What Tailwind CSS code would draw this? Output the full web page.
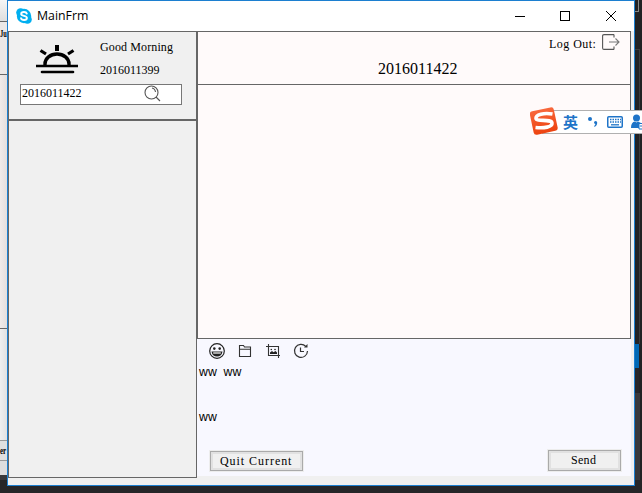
<!DOCTYPE html>
<html lang="en">
<head>
<meta charset="utf-8">
<title>MainFrm</title>
<script src="https://cdn.jsdelivr.net/npm/@tailwindcss/browser@4"></script>
</head>
<body class="w-[642px] h-[493px] overflow-hidden relative bg-[#262628] font-['Liberation_Serif',serif] text-black">
<div class="flex h-[493px]">
  <!-- window behind, left edge -->
  <div class="w-[7px] shrink-0 overflow-hidden flex flex-col text-[10px] leading-none">
    <div class="h-[22px] shrink-0 bg-linear-to-b from-[#f6f6f6] to-[#dedede] border-b border-[#666]"></div>
    <div class="h-[53px] shrink-0 bg-[#ece8e7] border-b border-[#666] pt-[7px]"><span class="block w-[11px] whitespace-nowrap origin-left scale-x-[.64] font-['Liberation_Serif',serif] font-bold">Ju</span></div>
    <div class="h-[254px] shrink-0 bg-linear-to-r from-[#f0ebea] to-[#e4dfde] border-b border-[#666]"></div>
    <div class="h-[111px] shrink-0 bg-linear-to-r from-[#f0f0f0] to-[#e2e2e2]"></div>
    <div class="h-[21px] shrink-0 bg-[#e0e0e0] border-y border-[#999] pt-[5px]"><span class="block w-[9px] whitespace-nowrap origin-left scale-x-[.7] font-['Liberation_Serif',serif] font-bold">er</span></div>
    <div class="h-[14px] shrink-0 bg-[#dedede]"></div>
    <div class="h-[5px] shrink-0 bg-[#39393b]"></div>
  </div>
  <!-- main window -->
  <div class="w-[628px] h-[486px] shrink-0 border border-[#1c7fd0] bg-[#f0f0f0]">
    <div class="h-[30px] bg-white flex items-center pl-[8px]">
      <svg class="w-4 h-4" viewBox="0 0 16 16"><g fill="#00aff0"><circle cx="8" cy="8" r="7.2"/><circle cx="4.6" cy="4.6" r="4.4"/><circle cx="11.4" cy="11.4" r="4.4"/></g><path d="M10.8 5.6C10.4 4.4 9.4 4 8 4 6.3 4 5.2 4.700 5.200 5.900 5.200 8.400 10.900 7.300 10.900 10 10.900 11.300 9.700 12 8.100 12 6.400 12 5.300 11.400 5 10.100" fill="none" stroke="#fff" stroke-width="1.9" stroke-linecap="round"/></svg>
      <span class="ml-[5px] w-[52px] text-[12.300px] font-['Open_Sans',sans-serif] whitespace-nowrap">MainFrm</span>
      <svg class="ml-auto w-[104px] h-[12px] mr-[17px] shrink-0" viewBox="0 0 104 12" fill="none" stroke="#000" shape-rendering="crispEdges"><path d="M2 6.500h10"/><rect x="47.500" y="1.500" width="9" height="9"/><path d="M93 1l10 10M103 1L93 11" shape-rendering="auto"/></svg>
    </div>
    <div class="flex">
      <div class="w-[189px] shrink-0">
        <div class="h-[89px] border border-[#666] flex flex-col">
          <div class="flex h-[52px]">
            <svg class="w-[42px] h-[30px] ml-[27px] mt-[13px]" viewBox="0 0 42 30" fill="none" stroke="#000"><path d="M0 21h42" stroke-width="2.600"/><path d="M6 27h31" stroke-width="2.600" stroke-linecap="round"/><path d="M9 20.500v-1.500a12 10 0 0 1 24 0v1.500" stroke-width="3.400"/><path d="M21 0v6" stroke-width="4"/><path d="M4.500 5.500l5.500 3.500M37.500 5.500L32 9" stroke-width="3.200"/></svg>
            <div class="ml-[22px] pt-[8px] text-[12px] leading-[14px]">
              <span class="block w-[76px] whitespace-nowrap tracking-[.12px]">Good Morning</span>
              <span class="block mt-[9px]">2016011399</span>
            </div>
          </div>
          <div class="ml-[11px] w-[162px] h-[21px] bg-white border border-[#777] flex items-start pl-px text-[12px] leading-[17px]">
            <span>2016011422</span>
            <svg class="ml-[62px] w-[17px] h-[17px]" viewBox="0 0 17 17" fill="none" stroke="#555" stroke-width="1.100"><circle cx="7.500" cy="7.500" r="6.500"/><path d="M12 12l4 4M8 3q3 .5 3.500 4"/></svg>
          </div>
        </div>
        <div class="h-[358px] border border-[#666]"></div>
      </div>
      <div class="w-[434px] shrink-0">
        <div class="h-[54px] border border-[#666] bg-[#fffafa]">
          <div class="flex justify-end h-[24px] text-[12px] leading-[14px] pt-[5px]">
            <span class="block w-[53px] whitespace-nowrap tracking-[.45px]">Log Out:</span>
            <svg class="w-[18px] h-[16px] -mt-[3px] mr-[10px]" viewBox="0 0 18 16" fill="none" stroke="#555" stroke-width="1.100"><path d="M12 .6H2Q.6.600.6 2v12q0 1.400 1.400 1.400h10M12 .6v3M12 12.500v3"/><path d="M7 8h10M13.500 4.500L17 8l-3.500 3.500" stroke="#777"/></svg>
          </div>
          <div class="text-[16px] leading-[18px] pl-[180px] pt-[4px]">2016011422</div>
        </div>
        <div class="h-[254px] border border-t-0 border-[#666] bg-[#fffafa]"></div>
        <div class="h-[137px] w-[434px] bg-[#f8f8ff] flex flex-col">
          <div class="flex pl-[12px] pt-[4px] gap-[12px] h-[24px]">
            <svg class="w-4 h-4" viewBox="0 0 16 16"><circle cx="8" cy="8" r="7.300" fill="none" stroke="#222" stroke-width="1.200"/><circle cx="5.300" cy="5.600" r="1.300" fill="#222"/><circle cx="10.700" cy="5.600" r="1.300" fill="#222"/><path d="M2.500 8.500h11q-.8 5-5.500 5T2.500 8.500z" fill="#222"/><path d="M4.200 10h7.600" stroke="#fff" stroke-width="1.200"/></svg>
            <svg class="w-4 h-4" viewBox="0 0 16 16" fill="none" stroke="#333" stroke-width="1.100"><path d="M2.500 13.500v-11h4l1 1.500h6v9.500zM2.500 6.200h11"/></svg>
            <svg class="w-4 h-4" viewBox="0 0 16 16" fill="none" stroke="#333" stroke-width="1.100"><path d="M3.500 1v11.500H15M1 3.500h12.500V15"/><path d="M5 11V9.500l2-1.500 1.500 1.200L10.500 8 12 9.500V11z" fill="#222" stroke="none"/><circle cx="6.300" cy="6.500" r=".8" fill="#222" stroke="none"/><circle cx="10" cy="6.500" r=".8" fill="#222" stroke="none"/></svg>
            <svg class="w-4 h-4" viewBox="0 0 16 16" fill="none" stroke="#333" stroke-width="1.200"><path d="M12.800 3.500A6.500 6.500 0 1 0 14.500 8M7.500 4.500v4H11"/><path d="M11 4.500h3.500V1z" fill="#333" stroke="none"/></svg>
          </div>
          <div class="pl-[2px] text-[12.300px] leading-[15px] h-[84px] pt-[2px] font-['Liberation_Sans',sans-serif] whitespace-pre">ww  ww


ww</div>
          <div class="flex justify-between pl-[13px] pr-[10px] pt-px text-[12px]">
            <div class="mt-[3px] w-[93px] h-[20px] border border-[#aaa] bg-[#f0f0f0] shadow-[inset_0_0_0_2px_#e1e1e1,0_0_0_1px_#ededed] pl-[9px] leading-[19px]"><span class="block whitespace-nowrap tracking-[.95px]">Quit Current</span></div>
            <div class="mt-[2px] w-[73px] h-[21px] border border-[#aaa] bg-[#f0f0f0] shadow-[inset_0_0_0_2px_#e1e1e1,0_0_0_1px_#ededed] pl-[22px] leading-[19px]"><span class="block whitespace-nowrap tracking-[.3px]">Send</span></div>
          </div>
        </div>
      </div>
    </div>
  </div>
  <!-- dark window behind, right edge -->
  <div class="w-[7px] shrink-0 flex flex-col bg-[#222224]">
    <div class="h-[12px] mr-[3px] border-r border-b border-[#888]"></div>
    <div class="h-[37px]"></div>
    <div class="h-[24px] mr-[2px] border-t border-r border-[#3c3c3e]"></div>
    <div class="h-[271px] mr-[2px] border-r border-[#3c3c3e]"></div>
    <div class="h-[24px] mr-[3px] bg-[#0068b4]"></div>
    <div class="h-[25px] mr-[3px] bg-[#262628]"></div>
    <div class="h-[87px] mr-[2px] bg-[#38383a]"></div>
    <div class="grow bg-[#262628]"></div>
  </div>
</div>
<!-- floating input method bar -->
<div class="absolute left-[530px] top-[107px] w-[112px] h-[29px]">
  <div class="absolute left-[12px] top-[3px] right-0 h-[24px] bg-white border-y border-[#b0b0b0] flex items-center pl-[21px] text-[#1e74c8]">
    <span class="w-[16px] -mt-[2px] text-[15px] leading-none font-bold font-['Noto_Sans_CJK_SC',sans-serif]">英</span>
    <svg class="ml-[8px] w-[12px] h-[12px]" viewBox="0 0 12 12" fill="#1e74c8"><circle cx="3" cy="3" r="2"/><path d="M7 6.500a1.600 1.600 0 1 1 3.200 0Q10.300 9.500 7.300 11V9.800Q8.500 9 8.300 8 7.100 7.800 7 6.500z"/></svg>
    <svg class="ml-[8px] w-[16px] h-[12px] shrink-0" viewBox="0 0 16 12" fill="none" stroke="#1e74c8"><rect x=".75" y=".75" width="14.500" height="10.500" rx="1" stroke-width="1.500"/><path d="M3 3.500h11M3 6h11" stroke-width="1.300" stroke-dasharray="1.500 1"/><path d="M4 8.800h8" stroke-width="1.300"/></svg>
    <svg class="ml-[8px] w-[11px] h-[16px] shrink-0" viewBox="0 0 11 16"><circle cx="5.500" cy="4" r="3.500" fill="#1e74c8"/><path d="M0 14q0-6 4-6.500l1.500 1L7 7.500q3 .5 4 3.500v3z" fill="#1e74c8"/><path d="M12 9.500H8v5.500h4M9 12h3" fill="#fff" stroke="#1e74c8"/></svg>
  </div>
  <svg class="absolute left-0 top-0 w-[28px] h-[28px]" viewBox="0 0 28 28"><defs><linearGradient id="s" x2="0" y2="1"><stop stop-color="#f8683c"/><stop offset="1" stop-color="#ed4310"/></linearGradient></defs><rect x="1.500" y="2" width="24.500" height="24" rx="3" transform="rotate(-12 14 14)" fill="url(#s)"/><path d="M22.500 7C14 5.500 5.500 7.500 6 11.500c.5 3.500 15.500 0 16 4.500.5 4-8 5.500-16.500 4.500" fill="none" stroke="#fff" stroke-width="3.600"/></svg>
</div>
</body>
</html>
